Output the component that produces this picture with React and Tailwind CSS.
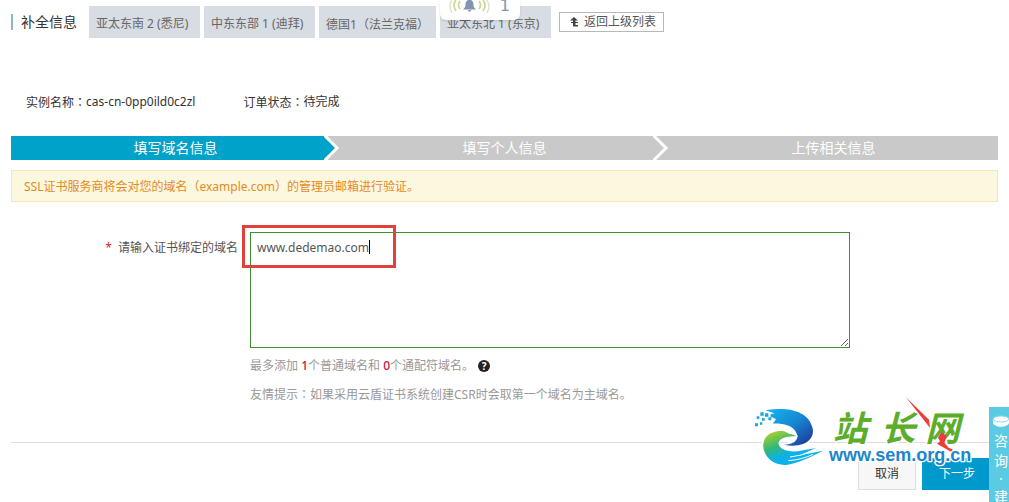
import React, { useState } from 'react';

const regions = ['亚太东南 2 (悉尼)', '中东东部 1 (迪拜)', '德国1（法兰克福）', '亚太东北 1 (东京)'];
const steps = ['填写域名信息', '填写个人信息', '上传相关信息'];

// Full-width punctuation sits in the middle of its box here
const Mid = ({ children }) => <span className="font-['Noto_Sans_CJK_TC',sans-serif]">{children}</span>;

const BellNotice = () => (
    <div className="absolute left-[440px] top-0 z-10 flex h-5 w-20 items-start justify-between rounded-b-md bg-white pl-2 pr-2.5 shadow">
        <svg width="44" height="15" viewBox="0 0 44 15" fill="none" aria-hidden="true">
            <path d="M21.500 0c-3 0-4 2-4 5 0 2-1 3-2.500 4.500h13c-1.500-1.500-2.500-2.500-2.500-4.500 0-3-1-5-4-5z" fill="#8295b0" />
            <path d="M19.500 10h4l-2 2z" fill="#8295b0" />
            <g stroke="#c6d48d" strokeWidth="1.500">
                <path d="M12 1q-3 4 0 8M31 1q3 4 0 8" />
                <path d="M8 0q-4 5 0 11M35 0q4 5 0 11" />
                <path d="M4 0q-4 6 0 13M39 0q4 6 0 13" stroke="#e0e6c2" />
            </g>
        </svg>
        <span className="font-['DejaVu_Sans',sans-serif] text-base leading-3 text-[#8295b0]">1</span>
    </div>
);

const Header = () => (
    <header className="flex items-center pt-1.5">
        <h1 className="mr-3 flex items-center gap-2 text-sm leading-4 text-[#333]">
            <span className="h-4 w-0.5 bg-[#8fb7cc]" />
            补全信息
        </h1>
        <nav className="flex gap-1">
            {regions.map((name) => (
                <button key={name} type="button" className="h-8 min-w-[111px] whitespace-nowrap bg-[#d8dce3] px-[7px] pt-1 text-left text-[#666]">
                    {name.startsWith('德国') ? <>德国1<Mid>（</Mid>法兰克福<Mid>）</Mid></> : name}
                </button>
            ))}
        </nav>
        <a href="#list" className="ml-2 flex h-5 items-center gap-px border border-[#b8b8b8] px-[7px] text-[#555]">
            <svg width="16" height="12" viewBox="0 0 16 12" fill="#444" aria-hidden="true">
                <path d="M7 1l4 3.500H8.500V6H11v1H8.500v2H11v1.500H6V7H4V6h2V4.500H3z" />
            </svg>
            返回上级列表
        </a>
    </header>
);

const Steps = () => (
    <ol className="flex h-6 bg-[#c9c9c9] text-sm leading-6 text-white">
        {steps.map((step, i) => (
            <li key={step} className="flex flex-1">
                <span className={`min-w-0 flex-1 text-center ${i === 0 ? 'bg-[#00a2ca]' : ''}`}>{step}</span>
                {i < 2 && (
                    <svg width="16" height="24" viewBox="0 0 16 24" className="relative -ml-4" aria-hidden="true">
                        <path d="M0 0h16v24H0z" fill="#c9c9c9" />
                        {i === 0 && <path d="M0 0l12 12L0 24z" fill="#00a2ca" />}
                        <path d="M0 -1l13 13L0 25" fill="none" stroke="#fff" strokeWidth="3" />
                    </svg>
                )}
            </li>
        ))}
    </ol>
);

const SiteMark = () => (
    <svg className="absolute left-[740px] top-[390px] z-20" width="240" height="82" viewBox="0 0 720 246" role="img" aria-label="站长网">
        <defs>
            <linearGradient id="wave" x1="0" y1="0" x2="1" y2="1">
                <stop offset="0" stopColor="#12b8ec" />
                <stop offset=".5" stopColor="#1686d4" />
                <stop offset="1" stopColor="#202e91" />
            </linearGradient>
            <linearGradient id="leaf" x1="0" y1="0" x2=".7" y2="1">
                <stop offset="0" stopColor="#c5d51c" />
                <stop offset=".4" stopColor="#35b875" />
                <stop offset=".65" stopColor="#0bb1e8" />
            </linearGradient>
        </defs>
        {/* wave mark */}
        <g stroke="#fff" strokeWidth="10" strokeLinejoin="round" paintOrder="stroke">
            <path d="M76 61C140 50 205 60 218 115C225 150 190 176 131 164C163 163 177 149 170 131C160 104 125 100 98 101L108 88L91 78L103 70Z" fill="url(#wave)" />
            <path d="M168 138C157 130 152 135 142 129C132 120 114 124 103 126C79 130 65 155 71 178C80 214 116 232 154 222C190 213 218 197 249 182L180 196L227 174C188 181 160 189 136 181C105 168 112 147 140 141Z" fill="url(#leaf)" />
        </g>
        <path d="M150 201q35-3 66-18M145 212q41-3 74-19" stroke="#fff" strokeWidth="3" fill="none" />
        <path d="M61 67h10v10H61zM75 70h10v10H75zM85 82h9v9h-9zM92 71h11v11H92zM66 84h8v8h-8zM50 79h8v8h-8zM45 100h9v9h-9zM60 97h7v7h-7z" fill="#18a9e0" />
        {/* name */}
        <g fill="#5cad2c" fontFamily="'Noto Sans CJK SC', sans-serif" fontWeight="700" fontStyle="italic" fontSize="104" stroke="#fff" strokeWidth="8" strokeLinejoin="round" paintOrder="stroke">
            <text x="278" y="154">站</text>
            <text x="422" y="152">长</text>
            <text x="556" y="154">网</text>
        </g>
        <path d="M498 22L567 89L570 114Z" fill="#ed3d38" />
        <path d="M604 126l17 13-8 19 13 15 13 6-5 7-43-25 9-7-6-11z" fill="#ed3d38" />
        <text x="267" y="214" fontFamily="'Liberation Sans', Arial, sans-serif" fontWeight="700" fontSize="54" fill="#1c86cb" stroke="#fff" strokeWidth="8" strokeLinejoin="round" paintOrder="stroke">www.sem.org.cn</text>
    </svg>
);

const SideContact = () => (
    <aside className="absolute bottom-0 right-0 top-[407px] z-10 w-5 overflow-hidden bg-[#5bcbe3] pt-2 text-center text-white">
        <svg width="20" height="16" viewBox="0 0 20 16" aria-hidden="true">
            <path d="M4 4v4c2 5 14 5 16 0V4z" fill="#fff" />
            <ellipse cx="12" cy="4" rx="8" ry="3" fill="#fff" stroke="#8edbea" />
        </svg>
        <a href="#contact" className="flex flex-col pl-1 text-sm leading-5">
            <span>咨</span>
            <span>询</span>
            <span className="leading-4">·</span>
            <span>建</span>
        </a>
    </aside>
);

export default function App() {
    const [domain, setDomain] = useState('www.dedemao.com');

    return (
        <div className="relative h-screen overflow-hidden bg-white px-[11px] font-['Noto_Sans','Noto_Sans_CJK_SC',sans-serif] text-xs text-[#333]">
            <BellNotice />
            <Header />

            <dl className="mt-[54px] flex gap-12 pl-[15px] leading-5">
                <div className="flex"><dt>实例名称<Mid>：</Mid></dt><dd>cas-cn-0pp0ild0c2zl</dd></div>
                <div className="flex"><dt>订单状态<Mid>：</Mid></dt><dd>待完成</dd></div>
            </dl>

            <div className="pt-[23px]">
                <Steps />
            </div>
            <p className="mt-2.5 h-8 border border-[#f4e8bd] bg-[#fcf7df] pl-3 leading-[30px] text-[#e68a1e]">
                SSL证书服务商将会对您的域名<Mid>（</Mid>example.com<Mid>）</Mid>的管理员邮箱进行验证。
            </p>

            <form className="mt-[30px]" onSubmit={(e) => e.preventDefault()}>
                <div className="flex">
                    <label htmlFor="domain" className="w-[227px] shrink-0 pt-1.5 text-right leading-5 text-[#555]">
                        <span className="mr-1.5 text-[#e6213c]">*</span>请输入证书绑定的域名
                    </label>
                    <div className="relative ml-3 w-[600px]">
                        <textarea
                            id="domain"
                            value={domain}
                            onChange={(e) => setDomain(e.target.value)}
                            className="block h-[116px] w-full resize border border-[#3c9128] px-1.5 py-[5px] leading-5 text-[#555] outline-none"
                        />
                        {/* caret */}
                        <span className="absolute left-[119px] top-2 h-3.5 w-px bg-black" />
                        {/* highlight around the typed domain */}
                        <span className="pointer-events-none absolute -left-2 -top-[7px] h-[43px] w-[154px] border-3 border-[#e0413f]" />
                    </div>
                </div>
                <div className="ml-[239px] text-[#999]">
                    <p className="mt-2 flex items-center leading-5">
                        <span>最多添加 <b className="font-medium text-[#c8103c]">1</b>个普通域名和 <b className="font-medium text-[#c8103c]">0</b>个通配符域名。</span>
                        <span className="ml-1 flex size-3 items-center justify-center rounded-full bg-[#222] text-[10px] font-bold text-white">?</span>
                    </p>
                    <p className="mt-2 leading-5">友情提示<Mid>：</Mid>如果采用云盾证书系统创建CSR时会取第一个域名为主域名。</p>
                </div>
                <div className="mt-[37px] flex justify-end gap-1.5 border-t border-[#ddd] pt-[15px]">
                    <button type="button" className="h-8 w-[58px] border border-[#ddd] bg-[#f7f7f7] text-[#333]">取消</button>
                    <button type="submit" className="h-8 w-[76px] bg-[#0099cc] pr-1.5 text-white">下一步</button>
                </div>
            </form>

            <SiteMark />
            <SideContact />
        </div>
    );
}
